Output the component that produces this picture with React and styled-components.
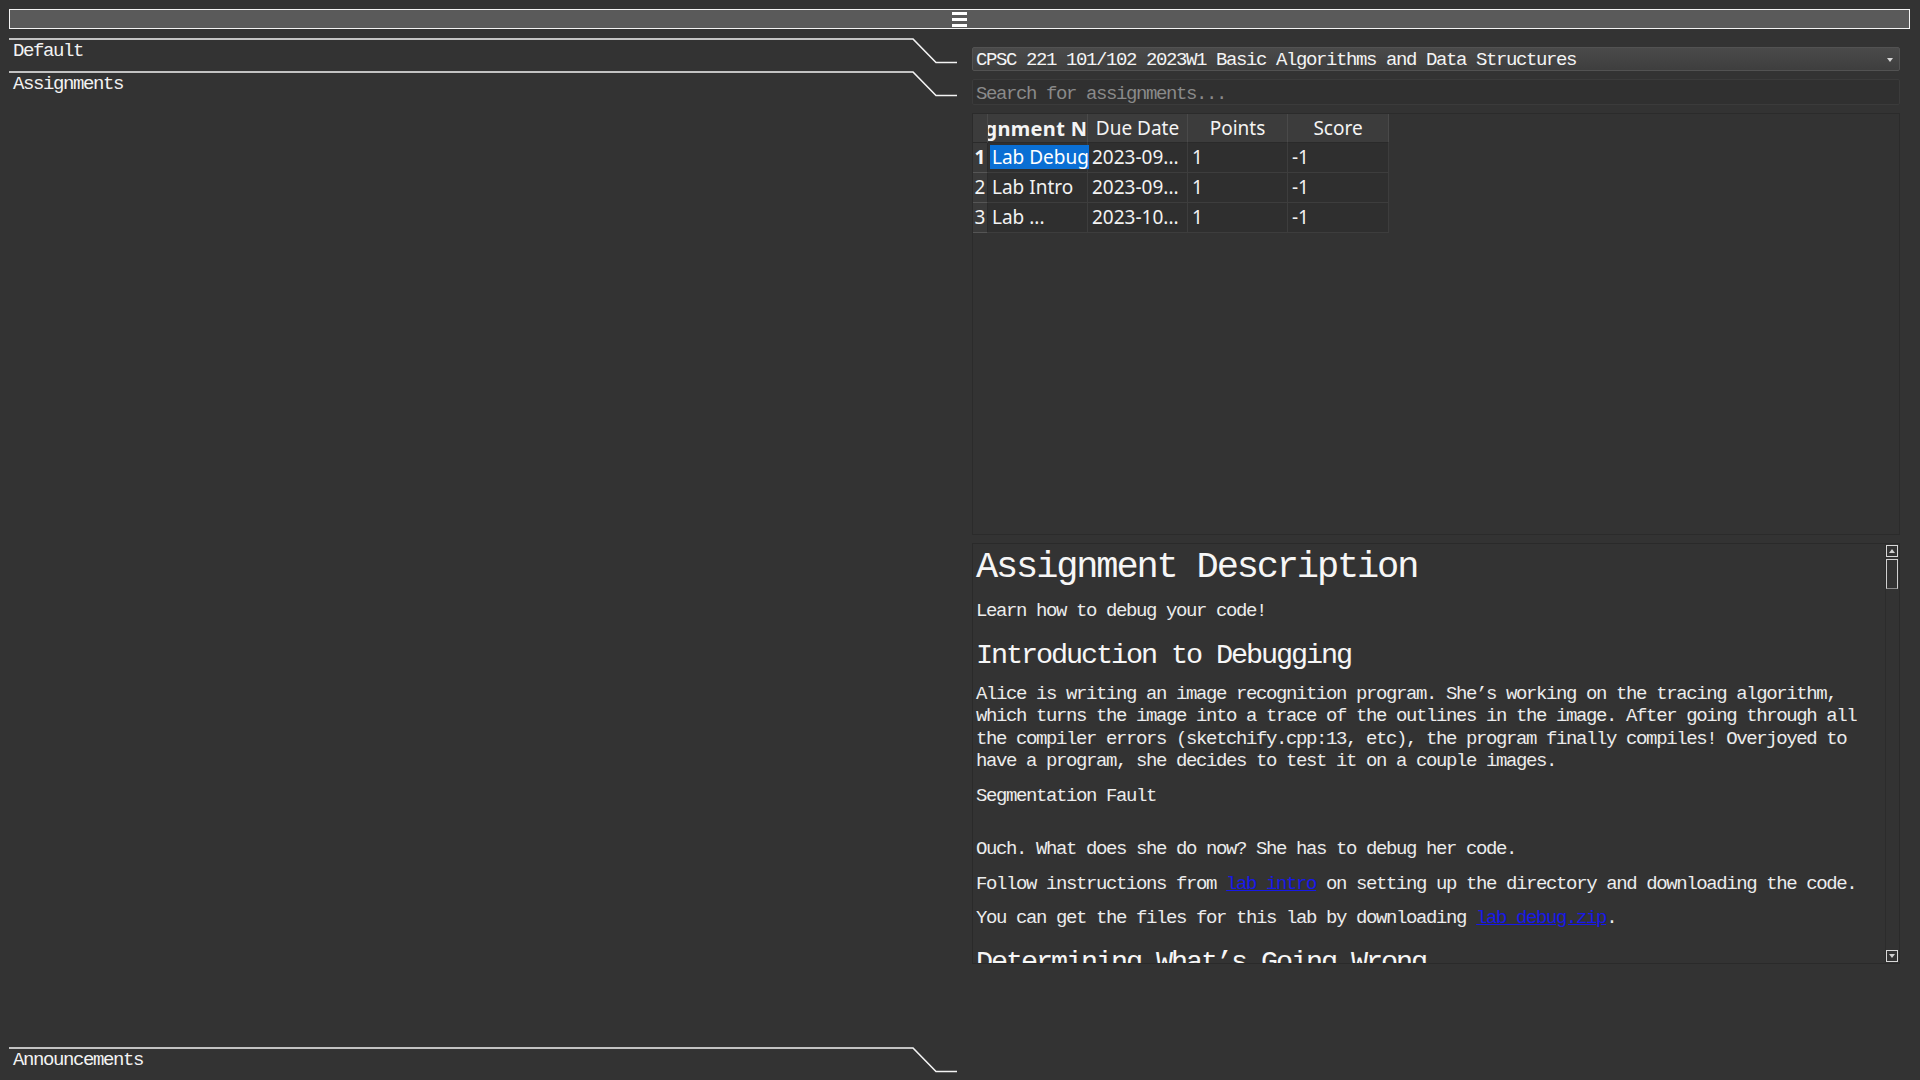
import React from "react";
import styled, { createGlobalStyle } from "styled-components";

const MONO = `"Liberation Mono", "DejaVu Sans Mono", monospace`;
const SANS = `"Noto Sans", "Noto Sans CJK SC", sans-serif`;

const GlobalStyle = createGlobalStyle`
  html, body {
    margin: 0;
    padding: 0;
    height: 100%;
    background: #333333;
    overflow: hidden;
  }
  #root { height: 100%; }
`;

const Page = styled.div`
  height: 100vh;
  box-sizing: border-box;
  padding: 9px 10px 0 9px;
  display: flex;
  flex-direction: column;
  font-family: ${MONO};
  font-size: 19px;
  letter-spacing: -1.4px;
  color: #f0f0f0;
`;

const TopBar = styled.div`
  height: 18px;
  flex-shrink: 0;
  border: 1px solid #f4f4f4;
  background: #5a5a5a;
  display: flex;
  align-items: center;
  justify-content: center;
`;

const Main = styled.div`
  flex: 1;
  min-height: 0;
  margin-top: 9px;
  display: flex;
  gap: 15px;
`;

const LeftCol = styled.div`
  width: 948px;
  flex-shrink: 0;
  display: flex;
  flex-direction: column;
`;

const Tab = styled.div`
  height: 33px;
  flex-shrink: 0;
  display: grid;
  margin-top: ${p => (p.$bottom ? "auto" : "0")};
  & > * { grid-area: 1 / 1; }
`;

const TabLabel = styled.div`
  padding: 3px 0 0 4px;
  line-height: 20px;
  color: #f2f2f2;
`;

const RightCol = styled.div`
  flex: 1;
  margin-right: 10px;
  padding-top: 9px;
  display: flex;
  flex-direction: column;
  gap: 8px;
`;

const Combo = styled.div`
  height: 24px;
  box-sizing: border-box;
  border: 1px solid #525252;
  border-radius: 2px;
  background: linear-gradient(#4a4a4a, #3e3e3e);
  display: flex;
  align-items: center;
  justify-content: space-between;
  padding: 2px 6px 0 3px;
  color: #f4f4f4;
`;

const Search = styled.input`
  height: 26px;
  box-sizing: border-box;
  border: 1px solid #3b3b3b;
  border-radius: 2px;
  background: #303030;
  padding: 3px 3px 0;
  outline: none;
  font-family: ${MONO};
  font-size: 19px;
  letter-spacing: -1.4px;
  color: #f0f0f0;
  &::placeholder { color: #8a8a8a; }
`;

const TablePanel = styled.div`
  height: 422px;
  box-sizing: border-box;
  border: 1px solid #2b2b2b;
  background: #333333;
`;

const Grid = styled.div`
  display: grid;
  grid-template-columns: 15px 100px 100px 100px 101px;
  grid-auto-rows: 30px;
  grid-template-rows: 29px;
  width: max-content;
  font-family: ${SANS};
  font-size: 19px;
  letter-spacing: 0;
`;

const HeadCell = styled.div`
  background: #3c3c3c;
  border-right: 1px solid #4a4a4a;
  border-bottom: 1px solid #2a2a2a;
  display: flex;
  align-items: center;
  justify-content: center;
  overflow: hidden;
  white-space: nowrap;
  font-size: ${p => (p.$bold ? "20px" : "19px")};
  letter-spacing: ${p => (p.$bold ? "0.3px" : "0")};
  font-weight: ${p => (p.$bold ? 700 : 400)};
  color: #f4f4f4;
  & > span { flex-shrink: 0; }
`;

const IndexCell = styled.div`
  background: #3a3a3a;
  border-bottom: 1px solid #555555;
  border-right: 1px solid #2a2a2a;
  display: flex;
  align-items: center;
  justify-content: center;
  padding-bottom: 1px;
  font-weight: ${p => (p.$bold ? 700 : 400)};
  color: #f4f4f4;
`;

const Cell = styled.div`
  background: #2f2f2f;
  border-right: 1px solid #3d3d3d;
  border-bottom: 1px solid #3d3d3d;
  display: flex;
  align-items: center;
  white-space: nowrap;
  padding-bottom: 1px;
  overflow: ${p => (p.$selected ? "visible" : "hidden")};
  padding-left: ${p => (p.$selected ? "2px" : "4px")};
  color: #f2f2f2;
`;

const Highlight = styled.span`
  display: flex;
  align-items: center;
  height: 24px;
  width: 99px;
  padding-left: 2px;
  box-sizing: border-box;
  background: #0a6fd4;
  color: #ffffff;
  position: relative;
  z-index: 1;
`;

const DescPanel = styled.div`
  height: 421px;
  box-sizing: border-box;
  border: 1px solid #2a2a2a;
  display: flex;
  overflow: hidden;
`;

const DescBody = styled.div`
  flex: 1;
  overflow: hidden;
  padding: 3px 6px 0 3px;
  color: #ececec;
  line-height: 22.5px;
`;

const H1 = styled.h1`
  margin: 0 0 13px;
  font-size: 37px;
  letter-spacing: -2.15px;
  line-height: 40px;
  font-weight: 400;
  color: #f6f6f6;
`;

const H2 = styled.h2`
  margin: 18px 0 12px;
  font-size: 28.5px;
  letter-spacing: -2.1px;
  line-height: 30px;
  font-weight: 400;
  color: #f6f6f6;
`;

const P = styled.p`
  margin: 0 0 12px;
`;

const Pre = styled.pre`
  margin: 0 0 31px;
  font-family: ${MONO};
  font-size: 19px;
  letter-spacing: -1.4px;
  line-height: 22.5px;
`;

const Link = styled.a`
  color: #1818e8;
  text-decoration: underline;
`;

const Scrollbar = styled.div`
  width: 12px;
  flex-shrink: 0;
  margin-right: 1px;
  border-left: 1px solid #2c2c2c;
  display: flex;
  flex-direction: column;
  align-items: center;
  padding: 1px 0 1px;
`;

const ScrollButton = styled.div`
  width: 12px;
  height: 12px;
  box-sizing: border-box;
  border: 1px solid #d8d8d8;
  display: flex;
  align-items: center;
  justify-content: center;
  margin-top: ${p => (p.$down ? "auto" : "0")};
`;

const Thumb = styled.div`
  width: 12px;
  height: 30px;
  box-sizing: border-box;
  margin-top: 2px;
  border: 1px solid #d0d0d0;
  border-bottom-color: #8a8a8a;
`;

const TabShape = () => (
  <svg width="948" height="26" viewBox="0 0 948 26">
    <polyline
      points="0,1 904,1 927,24.5 948,24.5"
      fill="none"
      stroke="#f4f4f4"
      strokeWidth="1.6"
    />
  </svg>
);

const MenuIcon = () => (
  <svg width="15" height="15" viewBox="0 0 15 15">
    <rect x="0" y="0" width="15" height="3" fill="#fff" />
    <rect x="0" y="6" width="15" height="3" fill="#fff" />
    <rect x="0" y="12" width="15" height="3" fill="#fff" />
  </svg>
);

const Arrow = ({ up, color = "#cfcfcf" }) => (
  <svg width="6" height="4" viewBox="0 0 6 4">
    <polygon points={up ? "0,4 6,4 3,0" : "0,0 6,0 3,4"} fill={color} />
  </svg>
);

const rows = [
  { n: 1, name: "Lab Debug", due: "2023-09...", pts: "1", score: "-1" },
  { n: 2, name: "Lab Intro", due: "2023-09...", pts: "1", score: "-1" },
  { n: 3, name: "Lab ...", due: "2023-10...", pts: "1", score: "-1" },
];

export default function App() {
  return (
    <>
      <GlobalStyle />
      <Page>
        <TopBar>
          <MenuIcon />
        </TopBar>
        <Main>
          <LeftCol>
            <Tab>
              <TabShape />
              <TabLabel>Default</TabLabel>
            </Tab>
            <Tab>
              <TabShape />
              <TabLabel>Assignments</TabLabel>
            </Tab>
            <Tab $bottom>
              <TabShape />
              <TabLabel>Announcements</TabLabel>
            </Tab>
          </LeftCol>
          <RightCol>
            <Combo>
              <span>CPSC 221 101/102 2023W1 Basic Algorithms and Data Structures</span>
              <Arrow color="#d6d6d6" />
            </Combo>
            <Search placeholder="Search for assignments..." />
            <TablePanel>
              <Grid>
                <HeadCell />
                <HeadCell $bold><span>Assignment Name</span></HeadCell>
                <HeadCell>Due Date</HeadCell>
                <HeadCell>Points</HeadCell>
                <HeadCell>Score</HeadCell>
                {rows.map(r => (
                  <React.Fragment key={r.n}>
                    <IndexCell $bold={r.n === 1}>{r.n}</IndexCell>
                    <Cell $selected={r.n === 1}>
                      {r.n === 1 ? <Highlight>{r.name}</Highlight> : r.name}
                    </Cell>
                    <Cell>{r.due}</Cell>
                    <Cell>{r.pts}</Cell>
                    <Cell>{r.score}</Cell>
                  </React.Fragment>
                ))}
              </Grid>
            </TablePanel>
            <DescPanel>
              <DescBody>
                <H1>Assignment Description</H1>
                <P>Learn how to debug your code!</P>
                <H2>Introduction to Debugging</H2>
                <P>
                  Alice is writing an image recognition program. She’s working on the tracing algorithm,
                  which turns the image into a trace of the outlines in the image. After going through all
                  the compiler errors (sketchify.cpp:13, etc), the program finally compiles! Overjoyed to
                  have a program, she decides to test it on a couple images.
                </P>
                <Pre>Segmentation Fault</Pre>
                <P>Ouch. What does she do now? She has to debug her code.</P>
                <P>
                  Follow instructions from <Link href="#">lab_intro</Link> on setting up the directory and downloading the code.
                </P>
                <P>
                  You can get the files for this lab by downloading <Link href="#">lab_debug.zip</Link>.
                </P>
                <H2>Determining What’s Going Wrong</H2>
                <P>
                  Run the program on the given test images and compare the output with what you expect.
                </P>
              </DescBody>
              <Scrollbar>
                <ScrollButton><Arrow up /></ScrollButton>
                <Thumb />
                <ScrollButton $down><Arrow /></ScrollButton>
              </Scrollbar>
            </DescPanel>
          </RightCol>
        </Main>
      </Page>
    </>
  );
}
